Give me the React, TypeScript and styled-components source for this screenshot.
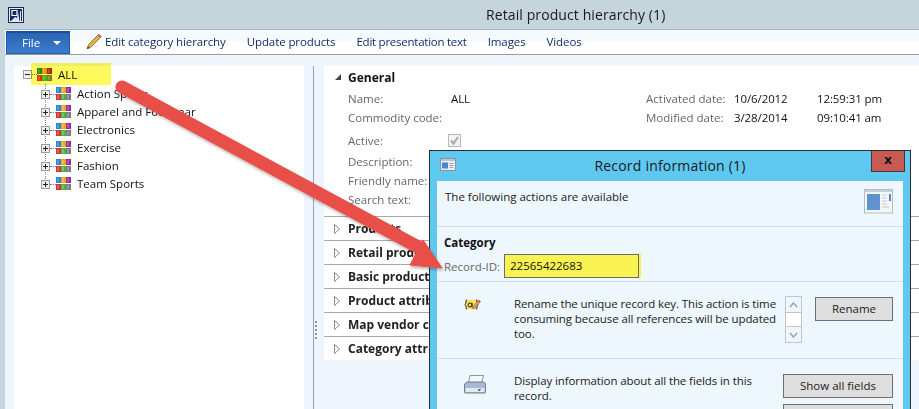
import React from "react"
import styled, { createGlobalStyle } from "styled-components"

const GlobalStyle = createGlobalStyle`
    html, body {
        margin: 0;
        padding: 0;
        overflow: hidden;
        background: #c5d5dc;
        font-family: "Open Sans", "Noto Sans", sans-serif;
        font-size: 11.5px;
        color: #222;
    }
`

const Page = styled.div`
    position: relative;
    width: 919px;
    height: 409px;
    overflow: hidden;
    display: flex;
    flex-direction: column;
    background: #c5d5dc;
`

const TitleBar = styled.div`
    height: 29px;
    flex: none;
    display: flex;
    align-items: center;
    padding-left: 8px;
    font-size: 14px;
    color: #1a1a1a;
`

const Title = styled.div`
    margin-left: 462px;
    letter-spacing: 0.1px;
`

const Shell = styled.div`
    flex: 1;
    margin-left: 5px;
    display: flex;
    flex-direction: column;
    min-height: 0;
`

const Ribbon = styled.div`
    height: 24px;
    flex: none;
    display: flex;
    align-items: center;
    gap: 21px;
    border-top: 1px solid #a9b6bd;
    border-bottom: 1px solid #9a9a9a;
    background: linear-gradient(#f5faff 0, #f5faff 11px, #fff 11px);
    color: #0c2a5e;
`

const FileButton = styled.div`
    width: 64px;
    height: 23px;
    margin-left: 1px;
    margin-right: -5px;
    box-sizing: border-box;
    display: flex;
    align-items: center;
    padding-left: 15px;
    gap: 13px;
    color: #fff;
    background: linear-gradient(#2a66b4, #3b7cca);
    border: 1px solid #1f5aa8;
    border-top: 2px solid #1c4f98;
`

const Caret = styled.span`
    width: 0;
    height: 0;
    border-left: 4px solid transparent;
    border-right: 4px solid transparent;
    border-top: 4px solid #fff;
`

const RibbonItem = styled.div<{ $tight?: boolean }>`
    display: flex;
    align-items: center;
    gap: 3px;
    white-space: nowrap;
    letter-spacing: ${p => (p.$tight ? "-0.25px" : "-0.1px")};
    padding-bottom: 2px;
`

const Strip = styled.div`
    height: 11px;
    flex: none;
    background: #eef5fd;
`

const Body = styled.div`
    flex: 1;
    display: flex;
    min-height: 0;
    background: #eef5fd;
    padding-left: 9px;
`

const TreePanel = styled.div`
    width: 290px;
    flex: none;
    background: #fff;
`

const TreeRow = styled.div<{ $root?: boolean }>`
    height: 18px;
    display: flex;
    align-items: center;
    white-space: nowrap;
    margin-left: ${p => (p.$root ? "9px" : "-4px")};
`

const RootHighlight = styled.div`
    display: flex;
    align-items: center;
    height: 22px;
    margin-top: -3px;
    margin-bottom: 1px;
`

const Expander = styled.span`
    width: 9px;
    height: 9px;
    flex: none;
    box-sizing: border-box;
    border: 1px solid #9c9c9c;
    background: #eee;
    position: relative;
    &::before {
        content: "";
        position: absolute;
        left: 1px;
        top: 3px;
        width: 5px;
        height: 1px;
        background: #222;
    }
`

const PlusExpander = styled(Expander)`
    margin-top: 2px;
    &::after {
        content: "";
        position: absolute;
        left: 3px;
        top: 1px;
        width: 1px;
        height: 5px;
        background: #222;
    }
`

const Connector = styled.span<{ $root?: boolean }>`
    width: ${p => (p.$root ? "5px" : "6px")};
    height: 0;
    flex: none;
    border-top: 1px dotted #777;
    margin-top: ${p => (p.$root ? "0" : "2px")};
`

const TreeLabel = styled.span`
    margin-left: 5px;
    color: #111;
`

const ChildList = styled.div`
    margin-left: 31px;
    margin-top: -2px;
    background: repeating-linear-gradient(#777 0 1px, transparent 1px 2px) 0 0 / 1px calc(100% - 8px) no-repeat;
`

const RootYellow = styled.div`
    position: absolute;
    left: 31px;
    top: 63px;
    width: 80px;
    height: 22px;
    background: rgba(255, 246, 30, 0.72);
    mix-blend-mode: multiply;
    pointer-events: none;
`

const Divider = styled.div`
    width: 9px;
    flex: none;
    border-right: 1px solid #a2a2a2;
    position: relative;
`

const Grip = styled.span`
    position: absolute;
    right: -4px;
    top: 255px;
    width: 2px;
    height: 18px;
    background: repeating-linear-gradient(#8a979f 0 2px, transparent 2px 4px);
`

const DetailPanel = styled.div`
    flex: 1;
    padding-left: 10px;
    min-width: 0;
`

const DetailCard = styled.div`
    background: #fff;
    padding-top: 1px;
`

const SectionHeader = styled.div`
    height: 20px;
    display: flex;
    align-items: center;
    padding-left: 11px;
    font-weight: 700;
    font-size: 12px;
    color: #111;
`

const ExpandedMark = styled.span`
    width: 0;
    height: 0;
    margin-right: 7px;
    border-left: 6px solid transparent;
    border-bottom: 6px solid #444;
`

const FormColumns = styled.div`
    display: flex;
    height: 129px;
    padding-top: 1px;
    box-sizing: border-box;
`

const FormLeft = styled.div`
    width: 322px;
    flex: none;
    padding-left: 24px;
    box-sizing: border-box;
`

const FormRow = styled.div<{ $gap?: number }>`
    height: 18px;
    display: flex;
    align-items: center;
    margin-top: ${p => p.$gap ?? 1}px;
`

const FieldLabel = styled.span<{ $width: number }>`
    width: ${p => p.$width}px;
    flex: none;
    color: #666;
`

const FieldValue = styled.span<{ $width?: number }>`
    color: #111;
    letter-spacing: -0.1px;
    ${p => (p.$width ? `width: ${p.$width}px; flex: none;` : "")}
`

const CheckBox = styled.span`
    width: 13px;
    height: 13px;
    margin-left: -3px;
    box-sizing: border-box;
    border: 1px solid #b9b9b9;
    background: #f2f2f2;
    display: flex;
`

const Section = styled.div`
    height: 24px;
    box-sizing: border-box;
    display: flex;
    align-items: center;
    border-top: 1px solid #a9a9a9;
    padding-left: 10px;
    font-weight: 700;
    font-size: 12px;
    color: #222;
    white-space: nowrap;
`

const SectionTitle = styled.span`
    width: 81px;
    overflow: hidden;
`

const CollapsedMark = styled.svg`
    width: 6px;
    height: 10px;
    margin-right: 8px;
    flex: none;
`

const Dialog = styled.div`
    position: absolute;
    left: 429px;
    top: 150px;
    width: 482px;
    height: 280px;
    box-sizing: border-box;
    border: 1px solid #2d2d2d;
    background: #5fc8f0;
    padding: 0 7px;
    display: flex;
    flex-direction: column;
`

const DialogHead = styled.div`
    height: 30px;
    flex: none;
    box-sizing: border-box;
    padding-bottom: 2px;
    display: flex;
    align-items: center;
    justify-content: center;
    position: relative;
    font-size: 14px;
    letter-spacing: 0.2px;
    color: #1a1a1a;
`

const DialogIcon = styled.svg`
    position: absolute;
    left: 3px;
    top: 7px;
`

const CloseButton = styled.div`
    position: absolute;
    right: -2px;
    top: 0;
    width: 34px;
    height: 21px;
    box-sizing: border-box;
    background: #c75a52;
    border: 1px solid #3a3a3a;
    border-top: 0;
    color: #111;
    font-weight: 700;
    font-size: 13px;
    line-height: 17px;
    text-align: center;
`

const DialogBody = styled.div`
    flex: 1;
    background: #eef6fe;
`

const IntroBlock = styled.div`
    height: 46px;
    display: flex;
    justify-content: space-between;
    padding: 8px 10px 0 8px;
    box-sizing: border-box;
    border-bottom: 1px solid #d6dfe6;
`

const CategoryBlock = styled.div`
    height: 55px;
    padding: 7px 0 0 7px;
    box-sizing: border-box;
    border-bottom: 1px solid #d6dfe6;
`

const CategoryTitle = styled.div`
    font-weight: 700;
    font-size: 11.5px;
    color: #111;
    height: 18px;
    line-height: 18px;
`

const RecordRow = styled.div`
    display: flex;
    align-items: center;
    margin-top: 2px;
    color: #666;
`

const RecordInput = styled.div`
    margin-left: 4px;
    width: 135px;
    height: 24px;
    box-sizing: border-box;
    border: 1px solid #6d6d6d;
    background: #f8f352;
    box-shadow: 2px 0 0 #f8f352;
    color: #111;
    line-height: 22px;
    padding-left: 5px;
`

const ActionRow = styled.div<{ $height: number }>`
    height: ${p => p.$height}px;
    box-sizing: border-box;
    display: flex;
    align-items: flex-start;
    padding: 14px 10px 0 27px;
    border-bottom: 1px solid #d6dfe6;
`

const ActionIcon = styled.div<{ $top: number }>`
    width: 50px;
    flex: none;
    padding-top: ${p => p.$top}px;
    line-height: 0;
`

const ActionText = styled.div<{ $width: number }>`
    width: ${p => p.$width}px;
    flex: none;
    line-height: 15px;
    color: #222;
    letter-spacing: -0.1px;
`

const Spinner = styled.div`
    width: 17px;
    height: 47px;
    flex: none;
    margin-left: -1px;
    box-sizing: border-box;
    border: 1px solid #c2c6ca;
    display: flex;
    flex-direction: column;
`

const SpinnerCell = styled.div<{ $grow?: boolean }>`
    flex: ${p => (p.$grow ? 1 : "none")};
    height: ${p => (p.$grow ? "auto" : "15px")};
    display: flex;
    align-items: center;
    justify-content: center;
    background: ${p => (p.$grow ? "#fff" : "transparent")};
    border-top: ${p => (p.$grow ? "1px solid #c2c6ca" : "0")};
    border-bottom: ${p => (p.$grow ? "1px solid #c2c6ca" : "0")};
`

const ButtonColumn = styled.div`
    margin-left: auto;
    margin-top: 1px;
    display: flex;
    flex-direction: column;
    gap: 6px;
`

const ActionButton = styled.div<{ $width: number }>`
    width: ${p => p.$width}px;
    height: 24px;
    box-sizing: border-box;
    border: 1px solid #6f6f6f;
    background: #dedede;
    color: #222;
    text-align: center;
    line-height: 22px;
`

const ArrowLayer = styled.svg`
    position: absolute;
    left: 0;
    top: 0;
    pointer-events: none;
`

const SAT_TOP = ["#1f86d8", "#f2a516", "#9a2aa0"]
const SAT_BOTTOM = ["#d8322e", "#48b548", "#7c7c7c"]

const CategoryIcon = ({ root }: { root?: boolean }) => {
    const top = root ? ["#1f8a48", "#e69a10", "#a02a18"] : SAT_TOP
    return (
        <svg width="15" height="13" viewBox="0 0 15 13" style={{ flex: "none", marginRight: 1 }}>
            {top.map((c, i) => (
                <g key={c}>
                    <rect x={i * 5} y="0" width="5" height="6" fill={c} />
                    <rect x={i * 5 + 1} y="1" width="2" height="4" fill="#fff" opacity="0.22" />
                </g>
            ))}
            {SAT_BOTTOM.map((c, i) => (
                <g key={c}>
                    <rect x={i * 5} y="7" width="5" height="6" fill={c} />
                    <rect x={i * 5 + 1} y="8" width="2" height="4" fill="#fff" opacity="0.22" />
                </g>
            ))}
        </svg>
    )
}

const AppLogo = () => (
    <svg width="16" height="16" viewBox="0 0 16 16">
        <rect width="16" height="16" fill="#14285a" />
        <rect x="1.5" y="1.5" width="13" height="13" fill="none" stroke="#e8eef5" />
        <path d="M4 3.5h5v5H4z" fill="none" stroke="#fff" strokeWidth="1.2" />
        <path d="M3 14l4-4 2 1 1-6 1.5 9zM12 14V4h1v10z" fill="#dfe8f2" />
    </svg>
)

const Pencil = () => (
    <svg width="16" height="17" viewBox="0 0 16 17">
        <path d="M12.8 1.2l2.4 2.4L5 14 1.2 15.8 2.6 11.6z" fill="#eeb23e" stroke="#77684a" strokeWidth="0.9" />
        <path d="M12.8 1.2l2.4 2.4-1.5 1.5-2.4-2.4z" fill="#d86a62" />
        <path d="M1.2 15.8l.7-2.3 1.6 1.4z" fill="#333" />
    </svg>
)

const WindowIcon = () => (
    <DialogIcon width="16" height="13" viewBox="0 0 16 13">
        <rect x="0.5" y="0.5" width="15" height="12" fill="#e9edf2" stroke="#8794a2" />
        <rect x="1" y="1" width="14" height="2" fill="#b9c3cf" />
        <rect x="2" y="4.5" width="6" height="6" fill="#4d86c6" />
        <path d="M9.5 5.5h4M9.5 7.5h4M9.5 9.5h4" stroke="#9aa6b2" />
    </DialogIcon>
)

const CardIcon = () => (
    <svg width="29" height="25" viewBox="0 0 29 25">
        <rect x="0.5" y="0.5" width="28" height="23.5" fill="#f4f6f8" stroke="#b4bcc4" />
        <rect x="1" y="1" width="27" height="2" fill="#c7ced6" />
        <rect x="3" y="5" width="13" height="16" fill="#5d94cf" />
        <path d="M18 6h5M18 9h5M18 12h5M18 15h5M18 18h7" stroke="#c6ccd3" />
        <rect x="25" y="5" width="2" height="7" fill="#4a8ad0" />
    </svg>
)

const RenameIcon = () => (
    <svg width="17" height="13" viewBox="0 0 17 13">
        <rect x="2" y="2" width="11" height="9" fill="#f4e04a" />
        <path d="M3 1.5c-1.5 0-.5 4-2 5 1.5 1 .5 5 2 5M12 1.5c1.5 0 .5 4 2 5-1.5 1-.5 5-2 5" fill="none" stroke="#222" />
        <circle cx="6" cy="7" r="2" fill="none" stroke="#222" />
        <path d="M8 5v4" stroke="#222" />
        <path d="M8 10l6.5-8 2 1.5-6.5 7.5z" fill="#d8a06a" stroke="#9a4a3a" strokeWidth="0.6" />
        <path d="M14.5 2l2 1.5-.8 1-2-1.5z" fill="#d8504a" />
    </svg>
)

const PrinterIcon = () => (
    <svg width="22" height="19" viewBox="0 0 22 19">
        <path d="M6 .5h13.5L17.5 8H4.5z" fill="#f6f7f8" stroke="#8a97a4" />
        <path d="M3 7h17l1.5 2v8a1 1 0 0 1-1 1H1.5a1 1 0 0 1-1-1V9z" fill="#a6bbd3" stroke="#6d7f93" />
        <rect x="1.5" y="13" width="19" height="4" fill="#e2e9f0" />
        <rect x="14" y="14" width="2" height="2" fill="#3a9a3a" />
        <rect x="16" y="14" width="1" height="1" fill="#d8504a" />
    </svg>
)

const Chevron = ({ up }: { up?: boolean }) => (
    <svg width="9" height="6" viewBox="0 0 9 6">
        <path d={up ? "M1 5l3.5-4L8 5" : "M1 1l3.5 4L8 1"} fill="none" stroke="#9a9a9a" strokeWidth="1.3" />
    </svg>
)

const Tick = () => (
    <svg width="11" height="11" viewBox="0 0 11 11">
        <path d="M2 5.5l2.5 3L9 2" fill="none" stroke="#a8a8a8" strokeWidth="2" />
    </svg>
)

const TREE_ITEMS = ["Action Sports", "Apparel and Footwear", "Electronics", "Exercise", "Fashion", "Team Sports"]
const SECTIONS = ["Products", "Retail products", "Basic product details", "Product attributes", "Map vendor categories", "Category attributes"]

const App: React.FunctionComponent = () => {
    return <>
    <GlobalStyle />
    <Page>
        <TitleBar>
            <AppLogo />
            <Title>Retail product hierarchy (1)</Title>
        </TitleBar>
        <Shell>
            <Ribbon>
                <FileButton>File <Caret /></FileButton>
                <RibbonItem><Pencil />Edit category hierarchy</RibbonItem>
                <RibbonItem>Update products</RibbonItem>
                <RibbonItem $tight>Edit presentation text</RibbonItem>
                <RibbonItem>Images</RibbonItem>
                <RibbonItem>Videos</RibbonItem>
            </Ribbon>
            <Strip />
            <Body>
                <TreePanel>
                    <RootHighlight>
                        <TreeRow $root>
                            <Expander />
                            <Connector $root />
                            <CategoryIcon root />
                            <TreeLabel>ALL</TreeLabel>
                        </TreeRow>
                    </RootHighlight>
                    <ChildList>
                        {TREE_ITEMS.map(item => (
                            <TreeRow key={item}>
                                <PlusExpander />
                                <Connector />
                                <CategoryIcon />
                                <TreeLabel>{item}</TreeLabel>
                            </TreeRow>
                        ))}
                    </ChildList>
                </TreePanel>
                <Divider><Grip /></Divider>
                <DetailPanel>
                    <DetailCard>
                        <SectionHeader><ExpandedMark />General</SectionHeader>
                        <FormColumns>
                            <FormLeft>
                                <FormRow><FieldLabel $width={103}>Name:</FieldLabel><FieldValue>ALL</FieldValue></FormRow>
                                <FormRow><FieldLabel $width={103}>Commodity code:</FieldLabel></FormRow>
                                <FormRow $gap={5}><FieldLabel $width={103}>Active:</FieldLabel><CheckBox><Tick /></CheckBox></FormRow>
                                <FormRow $gap={3}><FieldLabel $width={103}>Description:</FieldLabel></FormRow>
                                <FormRow><FieldLabel $width={103}>Friendly name:</FieldLabel></FormRow>
                                <FormRow><FieldLabel $width={103}>Search text:</FieldLabel></FormRow>
                            </FormLeft>
                            <div>
                                <FormRow><FieldLabel $width={88}>Activated date:</FieldLabel><FieldValue $width={83}>10/6/2012</FieldValue><FieldValue>12:59:31 pm</FieldValue></FormRow>
                                <FormRow><FieldLabel $width={88}>Modified date:</FieldLabel><FieldValue $width={83}>3/28/2014</FieldValue><FieldValue>09:10:41 am</FieldValue></FormRow>
                            </div>
                        </FormColumns>
                        {SECTIONS.map(title => (
                            <Section key={title}>
                                <CollapsedMark viewBox="0 0 6 10"><path d="M.5.5l5 4.5-5 4.5z" fill="#fff" stroke="#8a8a8a" /></CollapsedMark>
                                <SectionTitle>{title}</SectionTitle>
                            </Section>
                        ))}
                    </DetailCard>
                </DetailPanel>
            </Body>
        </Shell>
        <RootYellow />
        <Dialog>
            <DialogHead>
                <WindowIcon />
                Record information (1)
                <CloseButton>x</CloseButton>
            </DialogHead>
            <DialogBody>
                <IntroBlock>
                    <span>The following actions are available</span>
                    <CardIcon />
                </IntroBlock>
                <CategoryBlock>
                    <CategoryTitle>Category</CategoryTitle>
                    <RecordRow>Record-ID:<RecordInput>22565422683</RecordInput></RecordRow>
                </CategoryBlock>
                <ActionRow $height={77}>
                    <ActionIcon $top={2}><RenameIcon /></ActionIcon>
                    <ActionText $width={272}>Rename the unique record key. This action is time consuming because all references will be updated too.</ActionText>
                    <Spinner>
                        <SpinnerCell><Chevron up /></SpinnerCell>
                        <SpinnerCell $grow />
                        <SpinnerCell><Chevron /></SpinnerCell>
                    </Spinner>
                    <ButtonColumn><ActionButton $width={78}>Rename</ActionButton></ButtonColumn>
                </ActionRow>
                <ActionRow $height={80}>
                    <ActionIcon $top={2}><PrinterIcon /></ActionIcon>
                    <ActionText $width={250}>Display information about all the fields in this record.</ActionText>
                    <ButtonColumn>
                        <ActionButton $width={110}>Show all fields</ActionButton>
                        <ActionButton $width={110} />
                    </ButtonColumn>
                </ActionRow>
            </DialogBody>
        </Dialog>
        <ArrowLayer width="919" height="409" viewBox="0 0 919 409">
            <defs>
                <filter id="arrowShadow" x="-5%" y="-5%" width="110%" height="110%">
                    <feDropShadow dx="1" dy="2" stdDeviation="1.5" floodColor="#000" floodOpacity="0.3" />
                </filter>
            </defs>
            <g filter="url(#arrowShadow)">
                <path d="M122 87L420 248" stroke="#e8504a" strokeWidth="13" strokeLinecap="round" />
                <path d="M442 268L410 265 423 240z" fill="#e8504a" stroke="#e8504a" strokeWidth="1" />
            </g>
        </ArrowLayer>
    </Page>
    </>
}

export default App
